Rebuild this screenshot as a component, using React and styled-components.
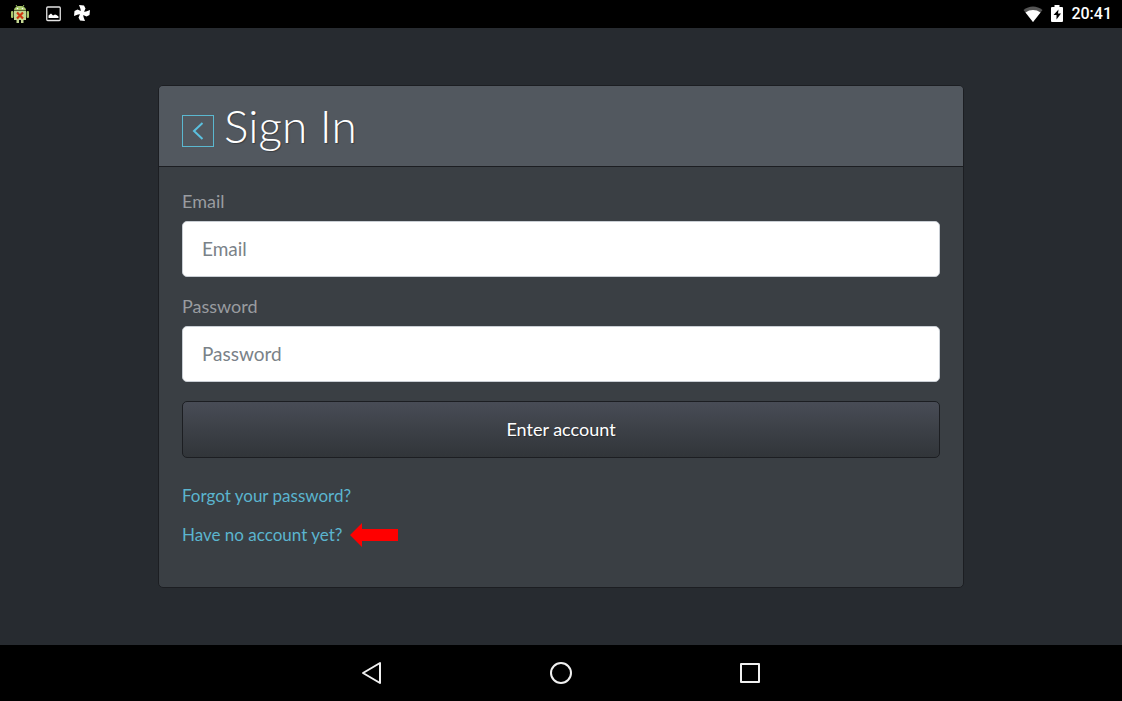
import React from "react";
import styled, { createGlobalStyle } from "styled-components";

const Global = createGlobalStyle`
  *, *::before, *::after { box-sizing: border-box; }
  body {
    margin: 0;
    background: #272b30;
    font-family: Lato, "Open Sans", sans-serif;
  }
`;

const Screen = styled.div`
  min-height: 100vh;
  display: flex;
  flex-direction: column;
`;

const StatusBar = styled.header`
  height: 28px;
  padding: 0 10px;
  background: #000;
  display: flex;
  align-items: center;
  justify-content: space-between;
`;

const StatusGroup = styled.div`
  display: flex;
  align-items: center;
  gap: ${(p) => p.$gap}px;
  svg { display: block; }
`;

const Clock = styled.time`
  color: #fff;
  font: 500 16px/28px Roboto, sans-serif;
`;

const Main = styled.main`
  flex: 1;
  padding: 57px 24px 56px;
`;

const Card = styled.section`
  max-width: 806px;
  margin: 0 auto;
  background: #3a3f44;
  border: 1px solid #1c1e22;
  border-radius: 5px;
  overflow: hidden;
`;

const CardHeader = styled.div`
  height: 81px;
  padding: 0 23px;
  display: flex;
  align-items: center;
  gap: 10px;
  background: #52585f;
  border-bottom: 1px solid #1c1e22;
`;

const BackButton = styled.button`
  width: 32px;
  height: 32px;
  margin-top: 10px;
  padding: 0;
  display: grid;
  place-items: center;
  background: transparent;
  border: 1px solid #5bb8d0;
  color: #5bc0de;
`;

const Title = styled.h1`
  margin: 0;
  color: #fff;
  font-size: 46px;
  line-height: 56px;
  font-weight: 300;
  text-shadow: 1px 1px 1px rgba(0, 0, 0, 0.3);
`;

const Form = styled.form`
  padding: 22px 23px 40px;
  display: flex;
  flex-direction: column;
`;

const Field = styled.div`
  display: flex;
  flex-direction: column;
  gap: 8px;
  margin-bottom: ${(p) => (p.$last ? 19 : 17)}px;
`;

const Label = styled.label`
  color: #999ca0;
  font-size: 18px;
  line-height: 24px;
`;

const Input = styled.input`
  width: 100%;
  height: 56px;
  padding: 0 19px 2px;
  border: 1px solid #c9ced4;
  border-radius: 5px;
  background: #fff;
  color: #272b30;
  font: 400 19px/24px Lato, "Open Sans", sans-serif;
  &::placeholder { color: #7a8288; opacity: 1; }
`;

const Submit = styled.button`
  height: 57px;
  padding: 0 19px 2px;
  border: 1px solid #1c1e22;
  border-radius: 5px;
  background: linear-gradient(#484c56, #3a3e44 60%, #313539);
  color: #fff;
  font: 400 18px/24px Lato, "Open Sans", sans-serif;
  text-shadow: 1px 1px 1px rgba(0, 0, 0, 0.3);
`;

const Links = styled.nav`
  margin-top: 26px;
  display: flex;
  flex-direction: column;
  gap: 15px;
`;

const LinkRow = styled.div`
  display: flex;
  align-items: center;
  gap: 8px;
`;

const TextLink = styled.a`
  color: #5bb5cf;
  font-size: 17px;
  line-height: 24px;
  text-decoration: none;
`;

const NavBar = styled.nav`
  height: 56px;
  background: #000;
  display: flex;
  align-items: center;
  justify-content: center;
  gap: 141px;
`;

const NavButton = styled.button`
  width: 48px;
  height: 48px;
  padding: 0;
  display: grid;
  place-items: center;
  background: transparent;
  border: 0;
  svg { display: block; }
`;

function AndroidIcon() {
  return (
    <svg width="20" height="20" viewBox="0 0 20 20">
      <path d="M6 1l2 3M14 1l-2 3" stroke="#9dbd62" strokeWidth="1" />
      <path d="M4 6.500C4 3.500 6.500 2 10 2s6 1.500 6 4.500z" fill="#a8c86a" />
      <path d="M4 7h12v9h-2.500v3h-2.500v-3h-2v3h-2.500v-3h-2.500z" fill="#c3d792" />
      <rect x="1" y="7" width="2.400" height="7" rx="1" fill="#a8c86a" />
      <rect x="16.600" y="7" width="2.400" height="7" rx="1" fill="#a8c86a" />
      <circle cx="7.500" cy="4.500" r=".8" fill="#fff" />
      <circle cx="12.500" cy="4.500" r=".8" fill="#fff" />
      <path d="M7 8.500l6 6M13 8.500l-6 6" stroke="#cf3a12" strokeWidth="2.200" />
    </svg>
  );
}

function PictureIcon() {
  return (
    <svg width="15" height="17" viewBox="0 0 15 17">
      <rect x=".75" y="1" width="13.500" height="13.500" rx="1" fill="none" stroke="#e4e4e4" strokeWidth="1.300" />
      <path d="M2.500 12V9.500L5 7.500l2 2L9 8.500l1.500.5 2 1.500V12z" fill="#fff" />
    </svg>
  );
}

function PinwheelIcon() {
  return (
    <svg width="18" height="20" viewBox="0 0 18 20" fill="#fff">
      {[0, 90, 180, 270].map((a) => (
        <path key={a} transform={`rotate(${a} 9 9)`} d="M8 9.500L7.500 5L6 1L11 1.500L12.500 4.500L10.500 9z" />
      ))}
    </svg>
  );
}

function WifiIcon() {
  return (
    <svg width="20" height="16" viewBox="0 0 20 16">
      <path d="M10 16L.5 4C6 -.8 14-.8 19.500 4z" fill="#555" />
      <path d="M10 16L2.500 6.500C7 3.200 13 3.200 17.500 6.500z" fill="#fff" />
    </svg>
  );
}

function BatteryIcon() {
  return (
    <svg width="12" height="18" viewBox="0 0 12 18">
      <path d="M3.500 0h5v2H11q1 0 1 1v13q0 1-1 1H1q-1 0-1-1V3q0-1 1-1h2.500z" fill="#fff" />
      <path d="M7.500 4.500L2.500 10h3v4.500l4.500-6H7z" fill="#000" />
    </svg>
  );
}

export default function App() {
  return (
    <Screen>
      <Global />
      <StatusBar>
        <StatusGroup $gap={16}>
          <AndroidIcon />
          <StatusGroup $gap={12}>
            <PictureIcon />
            <PinwheelIcon />
          </StatusGroup>
        </StatusGroup>
        <StatusGroup $gap={8}>
          <WifiIcon />
          <BatteryIcon />
          <Clock>20:41</Clock>
        </StatusGroup>
      </StatusBar>
      <Main>
        <Card>
          <CardHeader>
            <BackButton type="button" aria-label="Back">
              <svg width="12" height="18" viewBox="0 0 12 18" fill="none" stroke="currentColor" strokeWidth="2">
                <path d="M10.500 1L2 9l8.500 8" />
              </svg>
            </BackButton>
            <Title>Sign In</Title>
          </CardHeader>
          <Form onSubmit={(e) => e.preventDefault()}>
            <Field>
              <Label htmlFor="email">Email</Label>
              <Input id="email" type="email" placeholder="Email" />
            </Field>
            <Field $last>
              <Label htmlFor="password">Password</Label>
              <Input id="password" type="password" placeholder="Password" />
            </Field>
            <Submit type="submit">Enter account</Submit>
            <Links>
              <LinkRow>
                <TextLink href="#forgot">Forgot your password?</TextLink>
              </LinkRow>
              <LinkRow>
                <TextLink href="#register">Have no account yet?</TextLink>
                <svg width="49" height="24" viewBox="0 0 49 24" fill="#f00">
                  <path d="M0 12L12 0v6h36v12H12v6z" />
                </svg>
              </LinkRow>
            </Links>
          </Form>
        </Card>
      </Main>
      <NavBar>
        <NavButton aria-label="Back">
          <svg width="24" height="24" viewBox="0 0 24 24" fill="none" stroke="#f0f0f0" strokeWidth="2" strokeLinejoin="round">
            <path d="M3 12L20 2v20z" />
          </svg>
        </NavButton>
        <NavButton aria-label="Home">
          <svg width="24" height="24" viewBox="0 0 24 24" fill="none" stroke="#f0f0f0" strokeWidth="2">
            <circle cx="12" cy="12" r="10" />
          </svg>
        </NavButton>
        <NavButton aria-label="Recent apps">
          <svg width="24" height="24" viewBox="0 0 24 24" fill="none" stroke="#f0f0f0" strokeWidth="2" strokeLinejoin="round">
            <rect x="3" y="3" width="18" height="18" />
          </svg>
        </NavButton>
      </NavBar>
    </Screen>
  );
}
